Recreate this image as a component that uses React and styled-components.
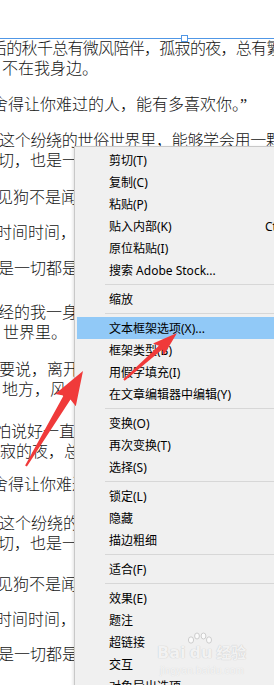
import React from "react";
import styled, { createGlobalStyle } from "styled-components";

const GlobalStyle = createGlobalStyle`
    html, body {
        margin: 0;
        padding: 0;
        background: #ffffff;
        overflow: hidden;
    }
`;

// ****page*****
const ScPage = styled.div`
    position: relative;
    width: 274px;
    height: 685px;
    overflow: hidden;
    background: #ffffff;
`;

/////text frame/////
const ScFrame = styled.div`
    position: relative;
    margin-top: 38px;
    border-top: 1px solid #5097e6;
`;

const ScHandle = styled.div`
    position: absolute;
    left: 181px;
    top: -4px;
    width: 5px;
    height: 5px;
    background: #ffffff;
    border: 1px solid #5097e6;
`;

const ScPara = styled.div`
    margin-top: ${props => props.$gap}px;
`;

const ScLine = styled.div`
    white-space: nowrap;
    margin-left: ${props => props.$shift}px;
    letter-spacing: ${props => props.$track || 0}px;
    font-family: "Liberation Serif", "Noto Sans CJK SC", serif;
    font-size: 16px;
    font-weight: 300;
    line-height: 20px;
    height: 20px;
    color: #141414;
`;

//////context menu///////
const ScMenu = styled.div`
    position: absolute;
    left: 74px;
    top: 146px;
    width: 280px;
    padding: 2px;
    background: #f0f0f0;
    border: 1px solid #c8c8c8;
    box-shadow: -1px 1px 3px rgba(0, 0, 0, 0.12);
    font-family: "Noto Sans", "Noto Sans CJK SC", sans-serif;
    font-size: 12px;
    color: #000000;
`;

const ScItem = styled.div`
    display: grid;
    grid-template-columns: 156px auto;
    align-items: center;
    height: 22px;
    padding-left: 32px;
    background: ${props => (props.$active ? "#91c9f7" : "transparent")};
    white-space: nowrap;
`;

const ScShortcut = styled.span`
    color: #000000;
`;

const ScSep = styled.div`
    height: 1px;
    margin: 3px 0 3px 28px;
    background: #d7d7d7;
`;

////watermark////
const ScMark = styled.div`
    position: absolute;
    left: 82px;
    top: 497px;
    display: flex;
    flex-direction: column;
    align-items: flex-start;
    pointer-events: none;
`;

const ScMarkRow = styled.div`
    display: flex;
    align-items: baseline;
    font-family: "DejaVu Sans", "Noto Sans CJK SC", sans-serif;
    font-weight: bold;
    font-size: 16px;
    line-height: 18px;
    color: rgba(255, 255, 255, 0.75);
    text-shadow: 0 0 1px #cdcdcd, 0 0 1px #cdcdcd;
`;

const ScPawBox = styled.span`
    position: relative;
    margin-left: 4px;
`;

const ScToes = styled.svg`
    position: absolute;
    left: -2px;
    top: -12px;
`;

const ScMarkCn = styled.span`
    margin-left: 4px;
    font-size: 15px;
`;

const ScMarkUrl = styled.div`
    margin: 3px 0 0 3px;
    font-family: "Liberation Sans", sans-serif;
    font-size: 10px;
    line-height: 11px;
    color: rgba(255, 255, 255, 0.75);
    text-shadow: 0 0 1px #cdcdcd;
    letter-spacing: 0.2px;
`;

const ScOverlay = styled.svg`
    position: absolute;
    left: 0;
    top: 0;
    pointer-events: none;
`;

// [shift, text, tracking]
const paragraphs = [
    { gap: 0, lines: [[-9, "后的秋千总有微风陪伴，孤寂的夜，总有繁星", -0.7], [2, "不在我身边。"]] },
    { gap: 16, lines: [[-8, "舍得让你难过的人，能有多喜欢你。”"]] },
    { gap: 16, lines: [[-1, "这个纷绕的世俗世界里，能够学会用一颗", -0.3], [-2, "切，也是一"]] },
    { gap: 17, lines: [[-3, "见狗不是闻"]] },
    { gap: 15, lines: [[-4, "时间时间，无"]] },
    { gap: 16, lines: [[-2, "是一切都是难"]] },
    { gap: 24, lines: [[-2, "经的我一身"], [3, "世界里。"]] },
    { gap: 17, lines: [[-1, "要说，离开"], [2, "地方，风"]] },
    { gap: 22, lines: [[-5, "怕说好一直"], [0, "寂的夜，总"]] },
    { gap: 13, lines: [[-8, "舍得让你难过"]] },
    { gap: 19, lines: [[-1, "这个纷绕的"], [-2, "切，也是一"]] },
    { gap: 21, lines: [[-3, "见狗不是闻"]] },
    { gap: 15, lines: [[-4, "时间时间，无"]] },
    { gap: 15, lines: [[-2, "是一切都是难"]] },
];

const menu = [
    { label: "剪切(T)" },
    { label: "复制(C)" },
    { label: "粘贴(P)" },
    { label: "贴入内部(K)", key: "Ctrl+Alt+V" },
    { label: "原位粘贴(I)" },
    { label: "搜索 Adobe Stock..." },
    "sep",
    { label: "缩放" },
    "sep",
    { label: "文本框架选项(X)...", active: true },
    { label: "框架类型(B)" },
    { label: "用假字填充(I)" },
    { label: "在文章编辑器中编辑(Y)" },
    "sep",
    { label: "变换(O)" },
    { label: "再次变换(T)" },
    { label: "选择(S)" },
    "sep",
    { label: "锁定(L)" },
    { label: "隐藏" },
    { label: "描边粗细" },
    "sep",
    { label: "适合(F)" },
    "sep",
    { label: "效果(E)" },
    { label: "题注" },
    { label: "超链接" },
    { label: "交互" },
    { label: "对象导出选项..." },
];

// tapered arrow, tail -> tip
function arrowPoints(tx, ty, px, py, headLen, headHalf, neckHalf, tailHalf) {
    const dx = px - tx;
    const dy = py - ty;
    const len = Math.hypot(dx, dy);
    const ux = dx / len;
    const uy = dy / len;
    const nx = -uy;
    const ny = ux;
    const bx = px - ux * headLen;
    const by = py - uy * headLen;
    const pts = [
        [tx + nx * tailHalf, ty + ny * tailHalf],
        [bx + nx * neckHalf, by + ny * neckHalf],
        [bx - ux * 3 + nx * headHalf, by - uy * 3 + ny * headHalf],
        [px, py],
        [bx - ux * 3 - nx * headHalf, by - uy * 3 - ny * headHalf],
        [bx - nx * neckHalf, by - ny * neckHalf],
        [tx - nx * tailHalf, ty - ny * tailHalf],
    ];
    return pts.map(p => p[0].toFixed(1) + "," + p[1].toFixed(1)).join(" ");
}

const Toes = () => (
    <ScToes width="26" height="13" viewBox="0 0 26 13">
        <g fill="rgba(255,255,255,0.75)" stroke="#cdcdcd" strokeWidth="1">
            <ellipse cx="4" cy="8" rx="2.6" ry="3.2" />
            <ellipse cx="10" cy="4" rx="2.4" ry="3" />
            <ellipse cx="16.5" cy="4" rx="2.4" ry="3" />
            <ellipse cx="22" cy="8" rx="2.5" ry="3.2" />
        </g>
    </ScToes>
);

class App extends React.Component {
    render() {
        return (
            <ScPage>
                <GlobalStyle />
                <ScFrame>
                    <ScHandle />
                    {paragraphs.map((p, i) => (
                        <ScPara key={i} $gap={p.gap}>
                            {p.lines.map(([shift, text, track], j) => (
                                <ScLine key={j} $shift={shift} $track={track}>
                                    {text}
                                </ScLine>
                            ))}
                        </ScPara>
                    ))}
                </ScFrame>

                <ScMenu>
                    {menu.map((m, i) =>
                        m === "sep" ? (
                            <ScSep key={i} />
                        ) : (
                            <ScItem key={i} $active={m.active}>
                                <span>{m.label}</span>
                                <ScShortcut>{m.key || ""}</ScShortcut>
                            </ScItem>
                        )
                    )}
                    <ScMark>
                        <ScMarkRow>
                            Bai
                            <ScPawBox>
                                <Toes />
                                du
                            </ScPawBox>
                            <ScMarkCn>经验</ScMarkCn>
                        </ScMarkRow>
                        <ScMarkUrl>jingyan.baidu.com</ScMarkUrl>
                    </ScMark>
                </ScMenu>

                <ScOverlay width="274" height="685" viewBox="0 0 274 685">
                    <polygon fill="#f03a3a" points={arrowPoints(26, 466, 83, 371, 31, 12, 4, 1)} />
                    <polygon fill="#f03a3a" points={arrowPoints(124, 380, 177, 333, 22, 8, 2.5, 1)} />
                </ScOverlay>
            </ScPage>
        );
    }
}

export default App;
